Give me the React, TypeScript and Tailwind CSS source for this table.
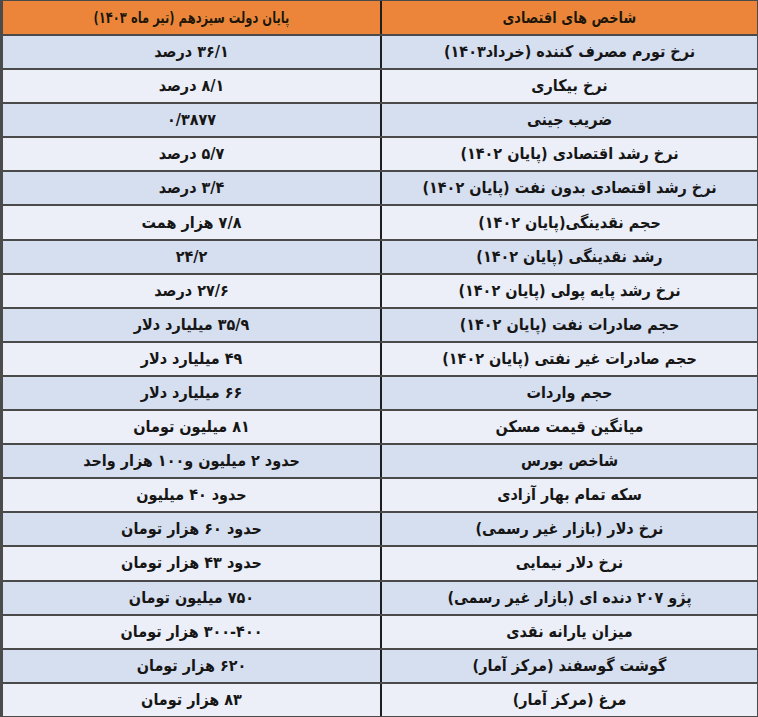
const rows: [string, string][] = [
  ['نرخ تورم مصرف کننده (خرداد۱۴۰۳)', '۳۶/۱ درصد'],
  ['نرخ بیکاری', '۸/۱ درصد'],
  ['ضریب جینی', '۰/۳۸۷۷'],
  ['نرخ رشد اقتصادی (پایان ۱۴۰۲)', '۵/۷ درصد'],
  ['نرخ رشد اقتصادی بدون نفت (پایان ۱۴۰۲)', '۳/۴ درصد'],
  ['حجم نقدینگی(پایان ۱۴۰۲)', '۷/۸ هزار همت'],
  ['رشد نقدینگی (پایان ۱۴۰۲)', '۲۴/۲'],
  ['نرخ رشد پایه پولی (پایان ۱۴۰۲)', '۲۷/۶ درصد'],
  ['حجم صادرات نفت (پایان ۱۴۰۲)', '۳۵/۹ میلیارد دلار'],
  ['حجم صادرات غیر نفتی (پایان ۱۴۰۲)', '۴۹ میلیارد دلار'],
  ['حجم واردات', '۶۶ میلیارد دلار'],
  ['میانگین قیمت مسکن', '۸۱ میلیون تومان'],
  ['شاخص بورس', 'حدود ۲ میلیون و۱۰۰ هزار واحد'],
  ['سکه تمام بهار آزادی', 'حدود ۴۰ میلیون'],
  ['نرخ دلار (بازار غیر رسمی)', 'حدود ۶۰ هزار تومان'],
  ['نرخ دلار نیمایی', 'حدود ۴۳ هزار تومان'],
  ['پژو ۲۰۷ دنده ای (بازار غیر رسمی)', '۷۵۰ میلیون تومان'],
  ['میزان یارانه نقدی', '۳۰۰-۴۰۰ هزار تومان'],
  ['گوشت گوسفند (مرکز آمار)', '۶۲۰ هزار تومان'],
  ['مرغ (مرکز آمار)', '۸۳ هزار تومان'],
];

export default function App() {
  return (
    <div
      dir="rtl"
      className="w-[758px] h-[717px] overflow-hidden bg-white font-['DejaVu_Sans_Condensed','DejaVu_Sans',sans-serif] font-bold text-[#161616]"
    >
      <div className="border-l-[3px] border-r border-t border-[#4b4b4b]">
        {/* header */}
        <div className="grid grid-cols-[377px_1fr] h-[35px] bg-[#ec843a] border-b-2 border-[#4a4a4a] text-[#24140a] text-[16px] font-bold [text-shadow:0_0_1px_#e8b04a]">
          <div className="flex items-center justify-center border-l-2 border-[#1e1e1e]">
            <span className="inline-block scale-x-[0.9]">شاخص های اقتصادی</span>
          </div>
          <div className="flex items-center justify-center whitespace-nowrap">
            <span className="inline-block scale-x-[0.8]">پایان دولت سیزدهم (تیر ماه ۱۴۰۳)</span>
          </div>
        </div>
        {rows.map(([name, value], i) => (
          <div
            key={i}
            className={
              'grid grid-cols-[377px_1fr] h-[34.1px] border-b-2 border-[#4a4a4a] text-[16px] ' +
              (i % 2 === 0 ? 'bg-[#d6dff0]' : 'bg-[#eceff7]')
            }
          >
            <div className="flex items-center justify-center border-l-2 border-[#1e1e1e] whitespace-nowrap">{name}</div>
            <div className="flex items-center justify-center whitespace-nowrap">{value}</div>
          </div>
        ))}
      </div>
    </div>
  );
}
